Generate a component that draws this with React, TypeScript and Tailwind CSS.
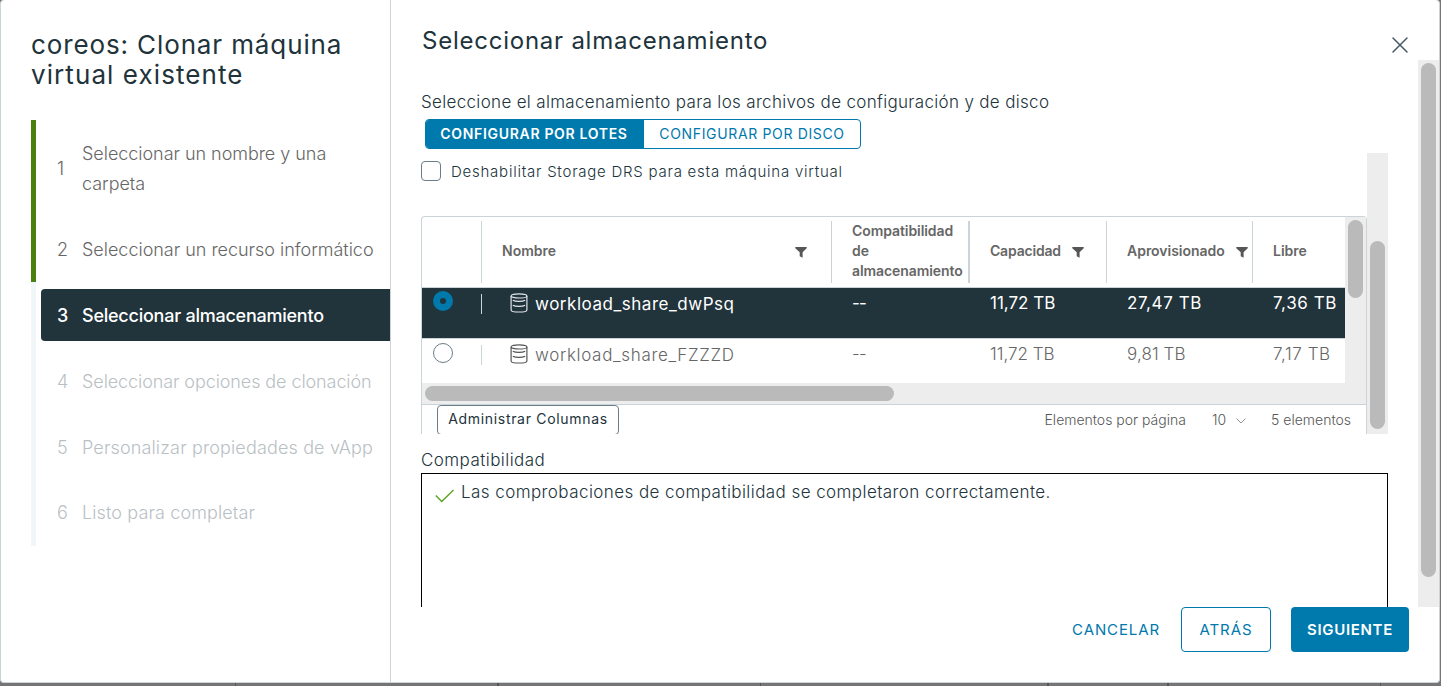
import type { ReactNode } from 'react';

function FilterIcon() {
  return (
    <svg width="12" height="11" viewBox="0 0 12 11" className="shrink-0" fill="#565656">
      <path d="M0.3 0h11.4v1.3L7.600 5.300V10.800L4.700 9.200V5.300L0.300 1.300z" />
    </svg>
  );
}

function StorageIcon({ className }: { className: string }) {
  return (
    <svg width="18" height="20" viewBox="0 0 18 20" fill="none" strokeWidth="1.2" className={className}>
      <ellipse cx="9" cy="2.900" rx="7.900" ry="2.100" />
      <path d="M1.100 2.900v14c0 1.200 3.500 2.100 7.900 2.100s7.900-.9 7.900-2.100v-14" />
      <path d="M2.800 7.200c1.400.8 3.700 1.200 6.200 1.200s4.800-.4 6.200-1.200M2.800 12.200c1.400.8 3.700 1.200 6.200 1.200s4.800-.4 6.200-1.200" />
    </svg>
  );
}

function Step({ n, children, className, tracking }: { n: number; children: ReactNode; className: string; tracking: string }) {
  return (
    <li className={`ml-[5px] flex items-center rounded-l-[4px] pl-4 text-[18px] leading-[30px] ${className}`}>
      <span className="w-[25px] shrink-0">{n}</span>
      <span className={`whitespace-nowrap ${tracking}`}>{children}</span>
    </li>
  );
}

function Row({
  name, capacity, used, free, selected, nameTracking,
}: { name: string; capacity: string; used: string; free: string; selected?: boolean; nameTracking: string }) {
  return (
    <div
      className={`grid grid-cols-[60px_350px_138px_137px_146px_92px] whitespace-nowrap text-[17px] leading-[30px] ${
        selected ? 'h-[51px] border-b border-[#cbd4d8] bg-[#21333b] font-normal text-white' : 'h-11 bg-white font-light text-[#666]'
      }`}
    >
      <div className="flex items-start justify-between pl-[11px]">
        {selected ? (
          <span className="mt-[3px] flex size-5 items-center justify-center rounded-full bg-[#0079ad]">
            <span className="size-1.5 rounded-full bg-[#21333b]" />
          </span>
        ) : (
          <span className="mt-1 size-5 rounded-full border border-[#6b7d86] bg-white" />
        )}
        <span className="mt-1.5 h-5 w-px bg-[#cbd4d8]" />
      </div>
      <div className="flex gap-[7px] pl-7 pt-px">
        <StorageIcon className={selected ? 'mt-1 stroke-[#dfe6e9]' : 'mt-1 stroke-[#565656]'} />
        <span className={nameTracking}>{name}</span>
      </div>
      <div className="pl-5 tracking-[-0.8px]">--</div>
      <div className="pl-5">{capacity}</div>
      <div className={selected ? 'pl-5 tracking-[0.6px]' : 'pl-5 tracking-[0.1px]'}>{used}</div>
      <div className="pl-5 tracking-[0.6px]">{free}</div>
    </div>
  );
}

function Sidebar() {
  return (
    <aside className="w-[390px] shrink-0 border-r border-[#cbd4d8] pl-[30px] pt-[30px]">
      <h1 className="text-[26px] leading-[30px] text-[#21333b]">
        <span className="tracking-[0.88px]">coreos: Clonar máquina</span>
        <br />
        <span className="tracking-[1.08px]">virtual existente</span>
      </h1>
      <nav className="mt-[30px] flex h-[426px]">
        <div className="flex w-[5px] shrink-0 flex-col bg-[#f1f6f8]">
          <span className="h-[162px] bg-[#48810f]" />
        </div>
        <ol className="flex flex-1 flex-col">
          <Step n={1} className="mt-[18px] h-[61px] font-light text-[#666]" tracking="tracking-[-0.04px]">
            Seleccionar un nombre y una
            <br />
            carpeta
          </Step>
          <Step n={2} className="mt-6 h-[52px] pt-px font-light text-[#666]" tracking="tracking-[-0.02px]">Seleccionar un recurso informático</Step>
          <Step n={3} className="mt-[14px] h-[52px] bg-[#21333b] pt-px font-medium text-white" tracking="tracking-[-0.24px]">Seleccionar almacenamiento</Step>
          <Step n={4} className="mt-[14px] h-[52px] pt-px font-light text-[#b9c0c4]" tracking="tracking-[-0.09px]">Seleccionar opciones de clonación</Step>
          <Step n={5} className="mt-[14px] h-[52px] pt-px font-light text-[#b9c0c4]" tracking="tracking-[0.14px]">Personalizar propiedades de vApp</Step>
          <Step n={6} className="mt-[13px] h-[52px] pt-px font-light text-[#b9c0c4]" tracking="tracking-[0.12px]">Listo para completar</Step>
        </ol>
      </nav>
    </aside>
  );
}

function Datagrid() {
  return (
    <div className="w-[946px] shrink-0 rounded-t-[4px] border border-b-0 border-[#cbd4d8]">
      <div className="flex h-[166px]">
        <div className="w-[923px]">
          <div className="grid h-[71px] grid-cols-[60px_350px_138px_137px_146px_92px] border-b border-[#cbd4d8] text-[14px] font-semibold leading-5 text-[#666]">
            <div className="my-1 mb-[5px] border-r border-[#cbd4d8]" />
            <div className="my-1 mb-[5px] flex items-center justify-between border-r border-[#cbd4d8] pl-5 pr-6">
              <span className="pb-0.5">Nombre</span>
              <FilterIcon />
            </div>
            <div className="my-1 mb-[5px] flex items-center whitespace-nowrap border-r-2 border-[#cbd4d8] pb-0.5 pl-5">
              <span className="tracking-[-0.08px]">
                Compatibilidad
                <br />
                de
                <br />
                almacenamiento
              </span>
            </div>
            <div className="my-1 mb-[5px] flex items-center gap-[11px] border-r border-[#cbd4d8] pl-5">
              <span className="pb-0.5 tracking-[-0.2px]">Capacidad</span>
              <FilterIcon />
            </div>
            <div className="my-1 mb-[5px] flex items-center gap-[11px] border-r border-[#cbd4d8] pl-5">
              <span className="pb-0.5 tracking-[-0.02px]">Aprovisionado</span>
              <FilterIcon />
            </div>
            <div className="my-1 mb-[5px] flex items-center pb-0.5 pl-5">Libre</div>
          </div>
          <Row name="workload_share_dwPsq" capacity="11,72 TB" used="27,47 TB" free="7,36 TB" selected nameTracking="tracking-[0.53px]" />
          <Row name="workload_share_FZZZD" capacity="11,72 TB" used="9,81 TB" free="7,17 TB" nameTracking="tracking-[0.67px]" />
        </div>
        <div className="w-[21px] bg-[#ededed] p-[3px]">
          <div className="h-[78px] rounded-full bg-[#bababa]" />
        </div>
      </div>
      <div className="h-[22px] border-b border-[#cbd4d8] bg-[#ededed] p-[3px]">
        <div className="h-[15px] w-[469px] rounded-full bg-[#bababa]" />
      </div>
      <div className="flex justify-between pl-[15px] pr-[15px] text-[14px] font-light text-[#565656]">
        <button className="h-[30px] w-[182px] rounded-[4px] border border-[#6b7d86] pb-1 font-normal tracking-[0.69px] text-[#21333b]">
          Administrar Columnas
        </button>
        <div className="flex h-7 items-center">
          <span>Elementos por página</span>
          <span className="ml-[26px]">10</span>
          <svg width="10" height="6" viewBox="0 0 10 6" fill="none" stroke="#8c9599" className="ml-2.5 mt-1">
            <path d="M0.500 0.500L5 5L9.500 0.500" />
          </svg>
          <span className="ml-[25px]">5 elementos</span>
        </div>
      </div>
    </div>
  );
}

export default function App() {
  return (
    <div className="flex h-[686px] w-[1441px] flex-col overflow-hidden bg-[#757575] font-['Inter','Liberation_Sans',sans-serif] text-[#21333b]">
      <div className="flex h-[683px] w-[1440px] shrink-0 overflow-hidden rounded-[4px] border border-t-0 border-[#cbd4d8] bg-white">
        <Sidebar />
        <main className="flex flex-1 flex-col">
          <header className="flex h-[60px] shrink-0 justify-between pl-[31px] pr-[31px]">
            <h2 className="mt-[26px] text-[24px] leading-[30px] tracking-[0.76px]">Seleccionar almacenamiento</h2>
            <button aria-label="Cerrar" className="mt-[37px] size-4">
              <svg width="16" height="16" viewBox="0 0 16 16" stroke="#455a64" strokeWidth="1.500" strokeLinecap="round">
                <path d="M1 1L15 15M15 1L1 15" />
              </svg>
            </button>
          </header>
          <div className="flex h-[547px] shrink-0 overflow-hidden">
            <section className="w-[1027px] pl-[30px]">
              <p className="mt-[27px] h-[31px] whitespace-nowrap text-[17px] font-light leading-[30px] tracking-[0.325px]">
                Seleccione el almacenamiento para los archivos de configuración y de disco
              </p>
              <div className="ml-1 mt-px flex h-[30px] w-[436px] overflow-hidden rounded-[4px] border border-[#0079ad] text-[14px]">
                <button className="w-[218px] whitespace-nowrap bg-[#0079ad] pb-0.5 pr-0.5 font-semibold tracking-[0.68px] text-white">CONFIGURAR POR LOTES</button>
                <button className="flex-1 whitespace-nowrap pb-0.5 tracking-[0.65px] text-[#0079ad]">CONFIGURAR POR DISCO</button>
              </div>
              <div className="mt-1 flex h-[281px] w-[967px] overflow-hidden">
                <div className="w-[946px]">
                  <label className="flex h-[63px] items-start gap-2.5 text-[15px] font-light leading-6 tracking-[0.76px]">
                    <span className="mt-2 size-5 rounded-[4px] border border-[#6b7d86]" />
                    <span className="mt-[7px]">Deshabilitar Storage DRS para esta máquina virtual</span>
                  </label>
                  <Datagrid />
                </div>
                <div className="w-[21px] shrink-0 bg-[#ededed] px-[3px] pt-[88px]">
                  <div className="h-[188px] rounded-full bg-[#bababa]" />
                </div>
              </div>
              <div className="h-[39px] pt-[11px] text-[17px] font-light leading-[30px] tracking-[0.44px]">Compatibilidad</div>
              <div className="flex h-[200px] w-[967px] border border-black pl-[13px] pt-[3px] text-[17px] font-light leading-[30px] tracking-[0.43px]">
                <svg width="20" height="14" viewBox="0 0 20 14" fill="none" stroke="#5aa220" strokeWidth="1.400" className="mr-[6px] mt-3">
                  <path d="M0.800 6.500L6.700 12.400L18.500 1" />
                </svg>
                Las comprobaciones de compatibilidad se completaron correctamente.
              </div>
            </section>
            <div className="w-[21px] shrink-0 bg-[#ededed] p-[3px]">
              <div className="h-[514px] rounded-full bg-[#bababa]" />
            </div>
          </div>
          <footer className="flex justify-end pr-[30px] text-[15px]">
            <button className="h-[45px] px-[21px] pt-0.5 tracking-[0.89px] text-[#0079ad]">CANCELAR</button>
            <button className="h-[45px] w-[90px] rounded-[4px] border border-[#0079ad] pt-0.5 tracking-[0.9px] text-[#0079ad]">ATRÁS</button>
            <button className="ml-5 h-[45px] w-[118px] rounded-[4px] bg-[#0079ad] pt-0.5 font-semibold tracking-[0.68px] text-white">SIGUIENTE</button>
          </footer>
        </main>
      </div>
      <div className="flex h-[3px]">
        <span className="w-[236px] border-r border-[#555]" />
        <span className="w-[263px] border-r-2 border-[#555]" />
        <span className="w-[262px] border-r border-[#555]" />
        <span className="w-[288px] border-r-2 border-[#555]" />
        <span className="w-[120px] border-r-2 border-[#555]" />
        <span className="w-[212px] border-r border-[#555]" />
      </div>
    </div>
  );
}
